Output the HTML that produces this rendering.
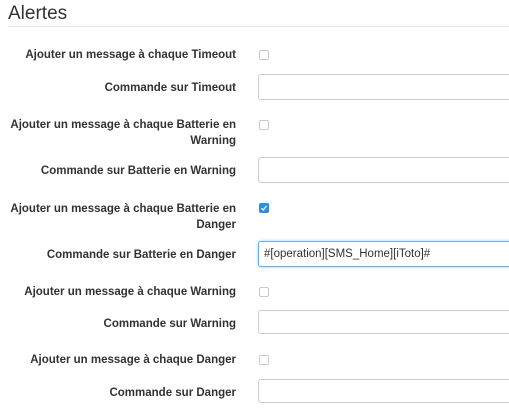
<!DOCTYPE html>
<html><head><meta charset="utf-8"><style>
body{margin:0;width:509px;height:414px;overflow:hidden;background:#fff;font-family:"Liberation Sans",sans-serif;color:#333;position:relative}
.t{position:absolute;left:8px;top:3px;font-size:19px;color:#333}
.hr{position:absolute;left:8px;top:26px;width:501px;height:1px;background:#e5e5e5}
.l{position:absolute;right:273px;width:236px;text-align:right;font-weight:bold;font-size:11.5px;line-height:16px}
.c{position:absolute;left:259px;width:8px;height:8px;border:1px solid #c8c8c8;border-radius:2px;background:#fff}
.ck{background:#2a8fe8;border-color:#2a8fe8}
.i{position:absolute;left:258px;width:260px;height:24px;border:1px solid #ccc;border-radius:3px;box-sizing:border-box;background:#fff}
.f{border-color:#66afe9;box-shadow:0 0 3px rgba(102,175,233,.6);font-size:11.5px;line-height:24px;padding-left:5px;color:#333}
</style></head><body>
<div class="t">Alertes</div><div class="hr"></div>
<div class="l" style="top:47px">Ajouter un message à chaque Timeout</div><div class="c" style="top:50px"></div>
<div class="l" style="top:80px">Commande sur Timeout</div><div class="i" style="top:74px;height:26px"></div>
<div class="l" style="top:117px">Ajouter un message à chaque Batterie en Warning</div><div class="c" style="top:120px"></div>
<div class="l" style="top:163px">Commande sur Batterie en Warning</div><div class="i" style="top:157px;height:26px"></div>
<div class="l" style="top:201px">Ajouter un message à chaque Batterie en Danger</div><div class="c ck" style="top:203px"><svg width="8" height="8" style="position:absolute;left:0;top:0"><path d="M1.5 4.2L3.3 6L6.5 2" stroke="#fff" stroke-width="1.3" fill="none"/></svg></div>
<div class="l" style="top:247px">Commande sur Batterie en Danger</div><div class="i f" style="top:241px;height:26px">#[operation][SMS_Home][iToto]#</div>
<div class="l" style="top:284px">Ajouter un message à chaque Warning</div><div class="c" style="top:287px"></div>
<div class="l" style="top:316px">Commande sur Warning</div><div class="i" style="top:310px"></div>
<div class="l" style="top:352px">Ajouter un message à chaque Danger</div><div class="c" style="top:355px"></div>
<div class="l" style="top:385px">Commande sur Danger</div><div class="i" style="top:379px"></div>
</body></html>
